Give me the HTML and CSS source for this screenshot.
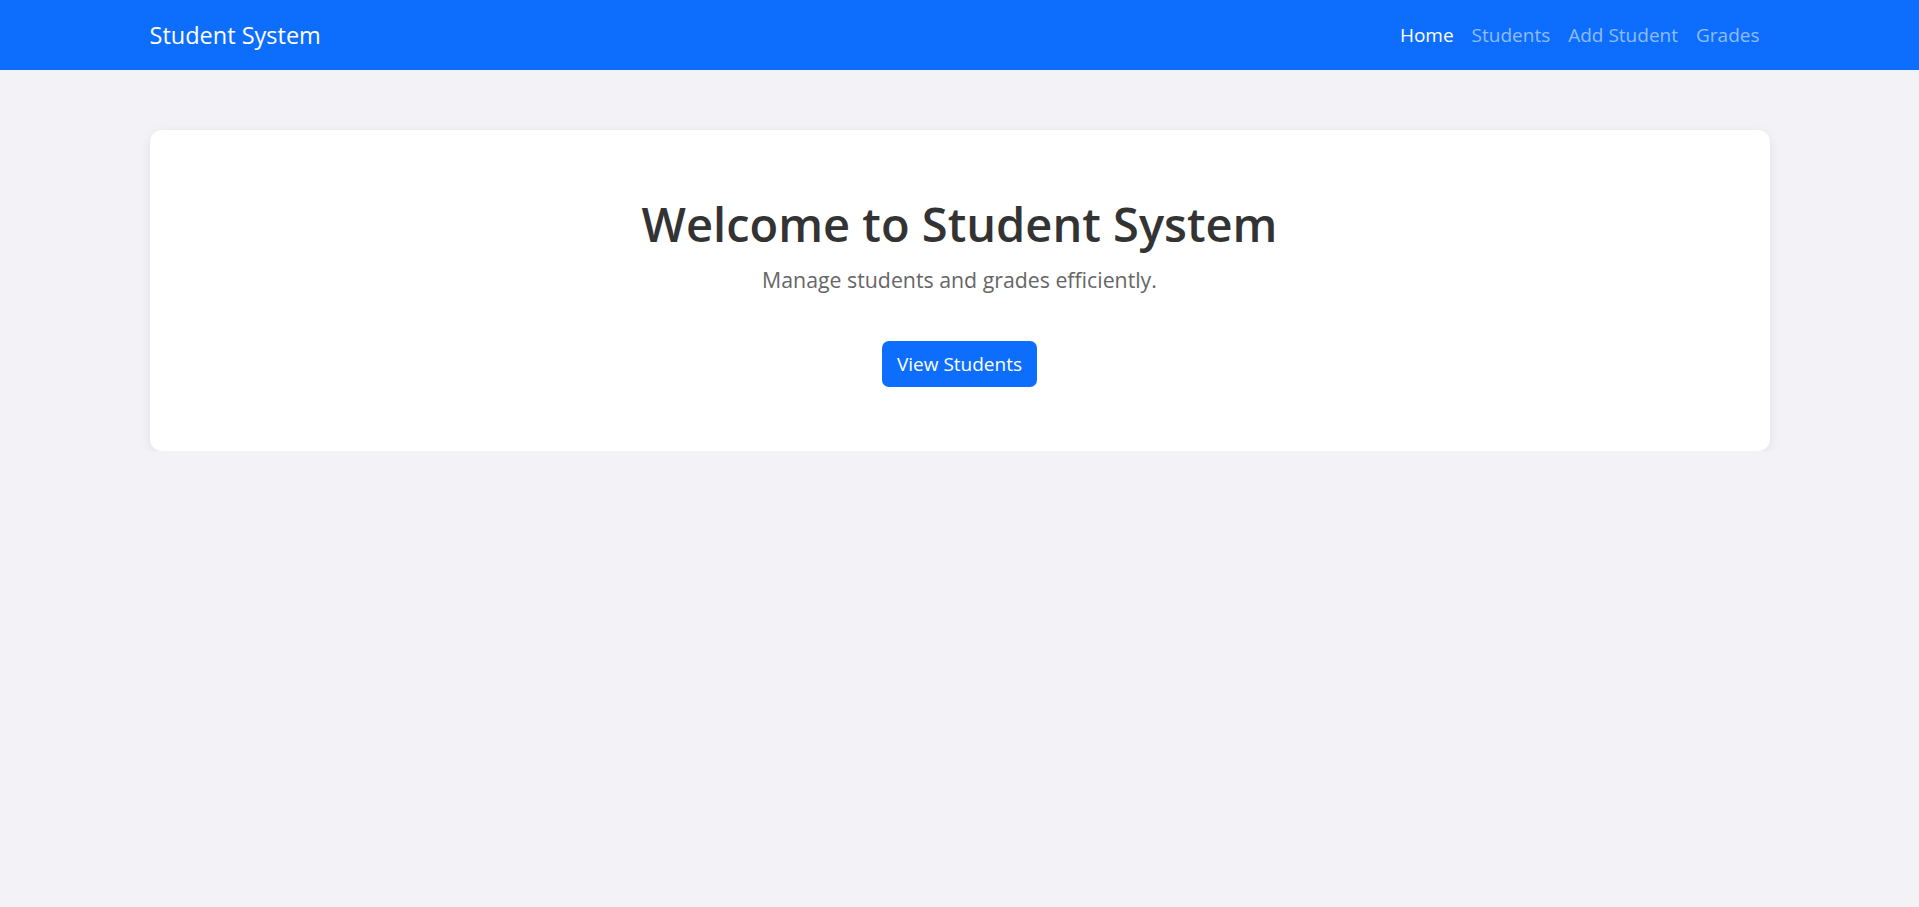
FILE: index.html
```html
<!DOCTYPE html>
<html lang="en">
<head>
<meta charset="utf-8">
<title>Student System</title>
<link rel="stylesheet" href="styles.css">
</head>
<body>
<nav class="navbar">
  <div class="container nav-inner">
    <a class="brand" href="#">Student System</a>
    <ul class="nav-links">
      <li><a class="nav-link active" href="#">Home</a></li>
      <li><a class="nav-link" href="#">Students</a></li>
      <li><a class="nav-link" href="#">Add Student</a></li>
      <li><a class="nav-link" href="#">Grades</a></li>
    </ul>
  </div>
</nav>
<main class="container main">
  <section class="card">
    <h1 class="title">Welcome to Student System</h1>
    <p class="lead">Manage students and grades efficiently.</p>
    <a class="btn" href="#">View Students</a>
  </section>
</main>
</body>
</html>
```

FILE: styles.css
```css
* { box-sizing: border-box; }
html, body { margin: 0; padding: 0; }
body {
  background: #f3f3f7;
  font-family: "Open Sans", "Noto Sans", "Liberation Sans", sans-serif;
  color: #333;
  font-size: 20px;
  line-height: 1.5;
}
a { text-decoration: none; }
.container {
  max-width: 1650px;
  margin: 0 auto;
  padding: 0 15px;
}
.navbar {
  background: #0d6efd;
  height: 70px;
}
.nav-inner {
  height: 70px;
  display: flex;
  align-items: center;
  justify-content: space-between;
}
.brand {
  color: #fff;
  font-size: 23.5px;
  line-height: 37px;
}
.nav-links {
  list-style: none;
  margin: 0;
  padding: 0;
  display: flex;
}
.nav-link {
  display: block;
  padding: 7px 9px;
  color: rgba(255,255,255,0.55);
  font-size: 19px;
  line-height: 30px;
}
.nav-links li:last-child .nav-link { padding-right: 10px; }
.nav-link.active { color: #fff; }
.main { padding-top: 60px; }
.card {
  background: #fff;
  border-radius: 12px;
  box-shadow: 0 3px 12px rgba(0,0,0,0.08);
  text-align: center;
  padding: 64px 20px 64px;
}
.title {
  margin: 0 0 10px;
  font-size: 47px;
  font-weight: 600;
  line-height: 60px;
  color: #333;
}
.lead {
  margin: 0 0 45px;
  font-size: 21.3px;
  line-height: 32px;
  color: #666;
}
.btn {
  display: inline-block;
  background: #0d6efd;
  color: #fff;
  font-size: 19px;
  line-height: 30px;
  padding: 8px 15px;
  border-radius: 7px;
}
```
